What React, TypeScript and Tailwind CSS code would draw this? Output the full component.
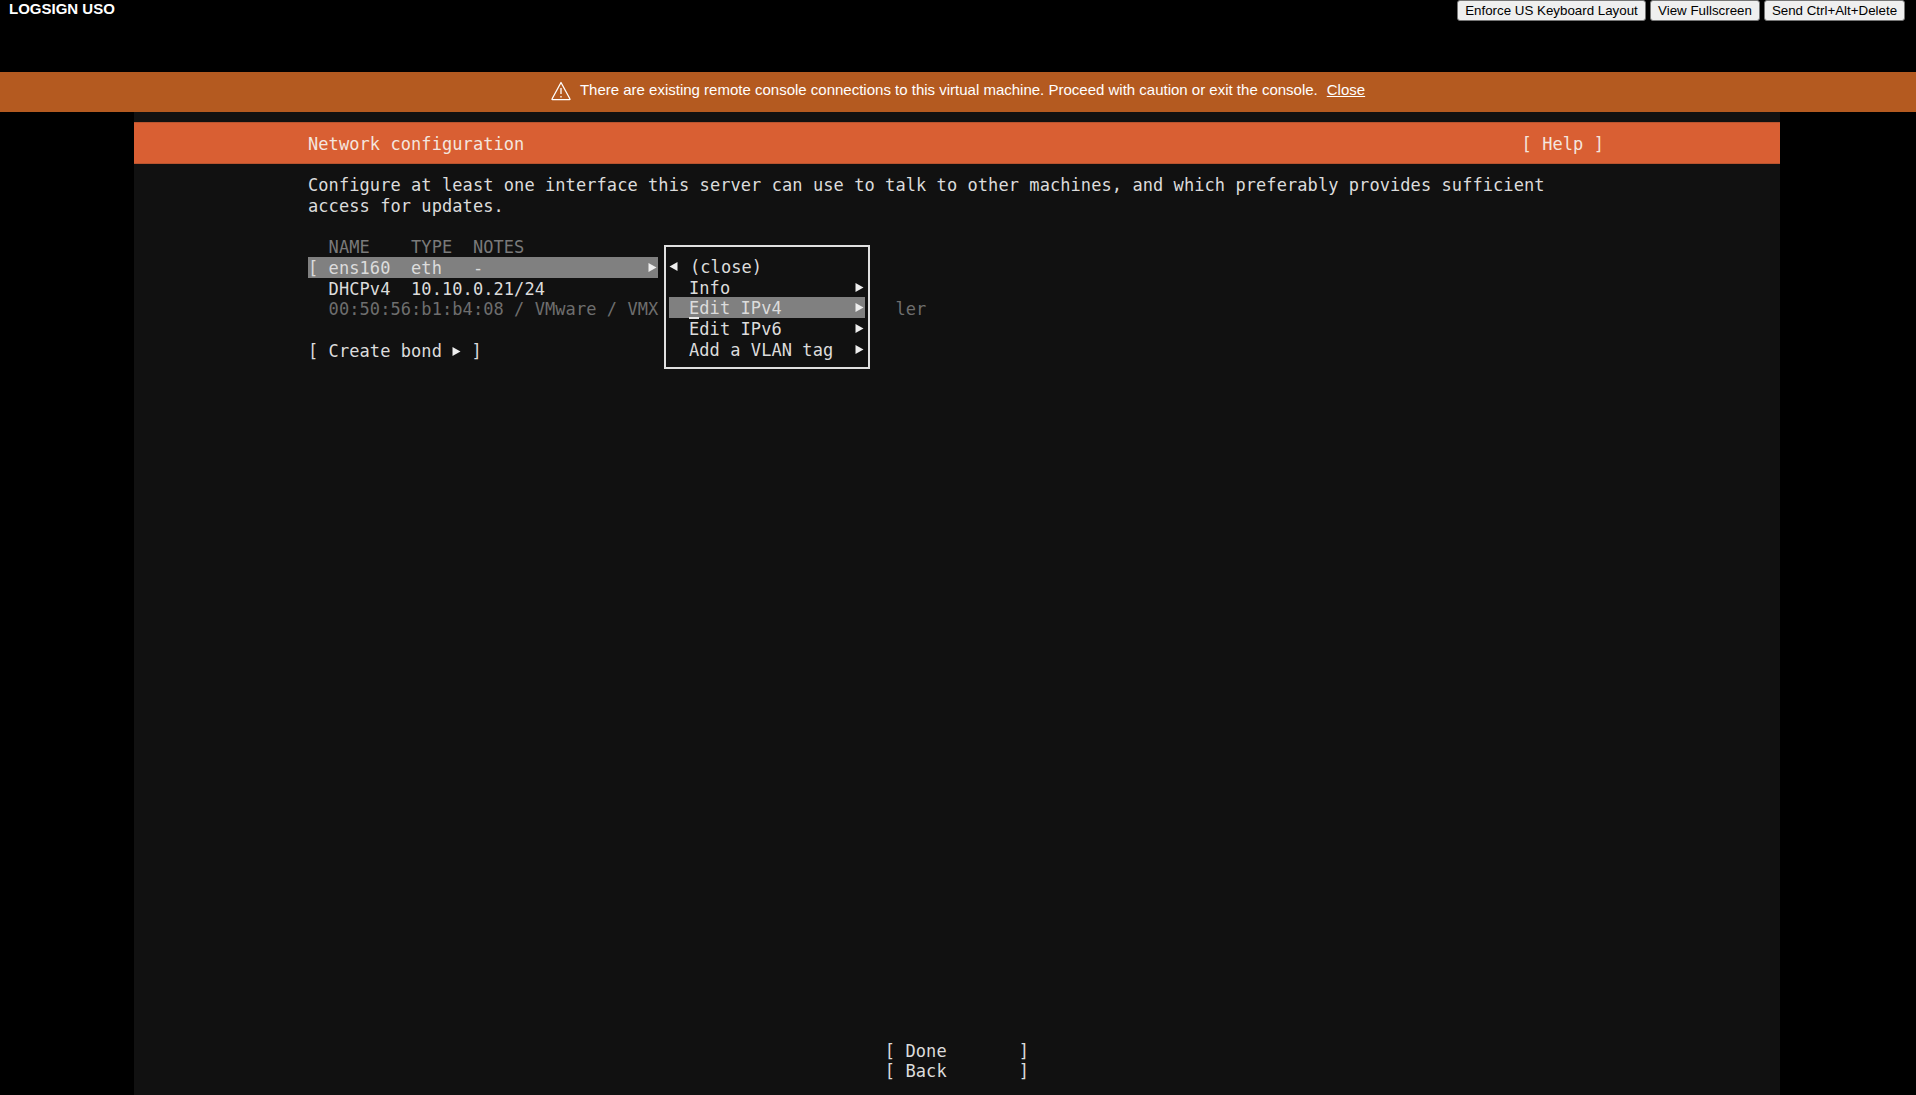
import React from 'react';

const Line = ({ children, className = '' }: { children?: React.ReactNode; className?: string }) => (
  <div className={`h-[20.72px] leading-[20.72px] whitespace-pre translate-y-[1px] ${className}`}>{children}</div>
);

const ArrowRight = () => (
  <svg width="9" height="9" viewBox="0 0 9 9" className="shrink-0">
    <path d="M0.5 0 L8.5 4.5 L0.5 9 Z" fill="#eeeeee" />
  </svg>
);

const ArrowLeft = () => (
  <svg width="9" height="9" viewBox="0 0 9 9" className="shrink-0">
    <path d="M8.5 0 L0.5 4.5 L8.5 9 Z" fill="#eeeeee" />
  </svg>
);

const TopButton = ({ label, className }: { label: string; className: string }) => (
  <button className={`h-[21px] bg-[#efefef] border border-[#767676] rounded-[3px] text-[13.33px] leading-none text-black whitespace-nowrap font-['Liberation_Sans',Arial,sans-serif] ${className}`}>
    {label}
  </button>
);

const MenuRow = ({ label, active }: { label: React.ReactNode; active?: boolean }) => (
  <div className={`h-[20.72px] leading-[20.72px] whitespace-pre pl-[20px] pr-[1px] flex items-center justify-between ${active ? 'bg-[#808080]' : ''}`}>
    <span className="relative translate-y-[1px]">{label}</span>
    <ArrowRight />
  </div>
);

export default function App() {
  return (
    <div className="h-screen w-full bg-black flex flex-col overflow-hidden">
      {/* top bar */}
      <div className="h-[72px] shrink-0 flex justify-between items-start pl-[9px] pr-[11px]">
        <div className="text-white font-bold text-[15px] leading-none pt-[1px] font-['Liberation_Sans',Arial,sans-serif]">LOGSIGN USO</div>
        <div className="flex gap-[4px]">
          <TopButton label="Enforce US Keyboard Layout" className="w-[189px]" />
          <TopButton label="View Fullscreen" className="w-[110px]" />
          <TopButton label="Send Ctrl+Alt+Delete" className="w-[141px]" />
        </div>
      </div>

      {/* warning banner */}
      <div className="h-10 shrink-0 bg-[#b45a20] flex items-center justify-center text-white text-[15px] font-['Liberation_Sans',Arial,sans-serif]">
        <svg width="20" height="20" viewBox="0 0 20 20" fill="none" stroke="#ffffff" strokeWidth="1.3" strokeLinejoin="round" className="mr-[9px] -mt-[2px]">
          <path d="M10 1.5 L19 18 a0.4 0.4 0 0 1 -0.4 0.6 H1.4 a0.4 0.4 0 0 1 -0.4 -0.6 Z" />
          <path d="M10 7 V13" />
          <path d="M10 15 V16.4" />
        </svg>
        <span className="-mt-[4px]">There are existing remote console connections to this virtual machine. Proceed with caution or exit the console.</span>
        <a className="underline ml-[9px] -mt-[4px]">Close</a>
      </div>

      {/* console */}
      <div className="relative flex-1 ml-[134px] mr-[136px] bg-[#111111] pt-[10px] flex flex-col text-[#dcdcdc] text-[17px] tracking-[0.07px] font-['DejaVu_Sans_Mono',monospace]">
        <div className="h-[42px] shrink-0 bg-[#d95f33] border-y border-[#b9542f] pl-[174px] pr-[176px] flex items-center justify-between text-[#f4e6df]">
          <span className="whitespace-pre translate-y-[2px]">Network configuration</span>
          <span className="whitespace-pre translate-y-[2px]">[ Help ]</span>
        </div>

        <div className="pl-[174px] pt-[10px] flex-1 flex flex-col">
          <Line>Configure at least one interface this server can use to talk to other machines, and which preferably provides sufficient</Line>
          <Line>access for updates.</Line>
          <Line />
          <Line className="text-[#7a7a7a]">{'  NAME    TYPE  NOTES'}</Line>
          <div className="w-[350px] h-[20.72px] leading-[20.72px] whitespace-pre bg-[#808080] flex items-center justify-between pr-[1px]">
            <span className="translate-y-[1px]">{'[ ens160  eth   -'}</span>
            <ArrowRight />
          </div>
          <Line>{'  DHCPv4  10.10.0.21/24'}</Line>
          <Line className="text-[#6e6e6e]">{'  00:50:56:b1:b4:08 / VMware / VMX                       ler'}</Line>
          <Line />
          <Line className="flex items-center">
            <span>{'[ Create bond '}</span>
            <ArrowRight />
            <span>{' ]'}</span>
          </Line>
        </div>

        <div className="flex flex-col items-center pb-[14px]">
          <Line>{'[ Done       ]'}</Line>
          <Line>{'[ Back       ]'}</Line>
        </div>

        {/* popup menu */}
        <div className="absolute left-[530px] top-[133px] w-[206px] h-[124px] border-2 border-[#e0e0e0] px-[3px] pt-[9px]">
          <div className="h-[20.72px] leading-[20.72px] whitespace-pre flex items-center">
            <ArrowLeft />
            <span className="ml-[12px] translate-y-[1px]">(close)</span>
          </div>
          <MenuRow label="Info" />
          <MenuRow active label={<>Edit IPv4<span className="absolute left-0 bottom-0 w-[10px] h-[2px] bg-[#e8e8e8]" /></>} />
          <MenuRow label="Edit IPv6" />
          <MenuRow label="Add a VLAN tag" />
        </div>
      </div>
    </div>
  );
}
